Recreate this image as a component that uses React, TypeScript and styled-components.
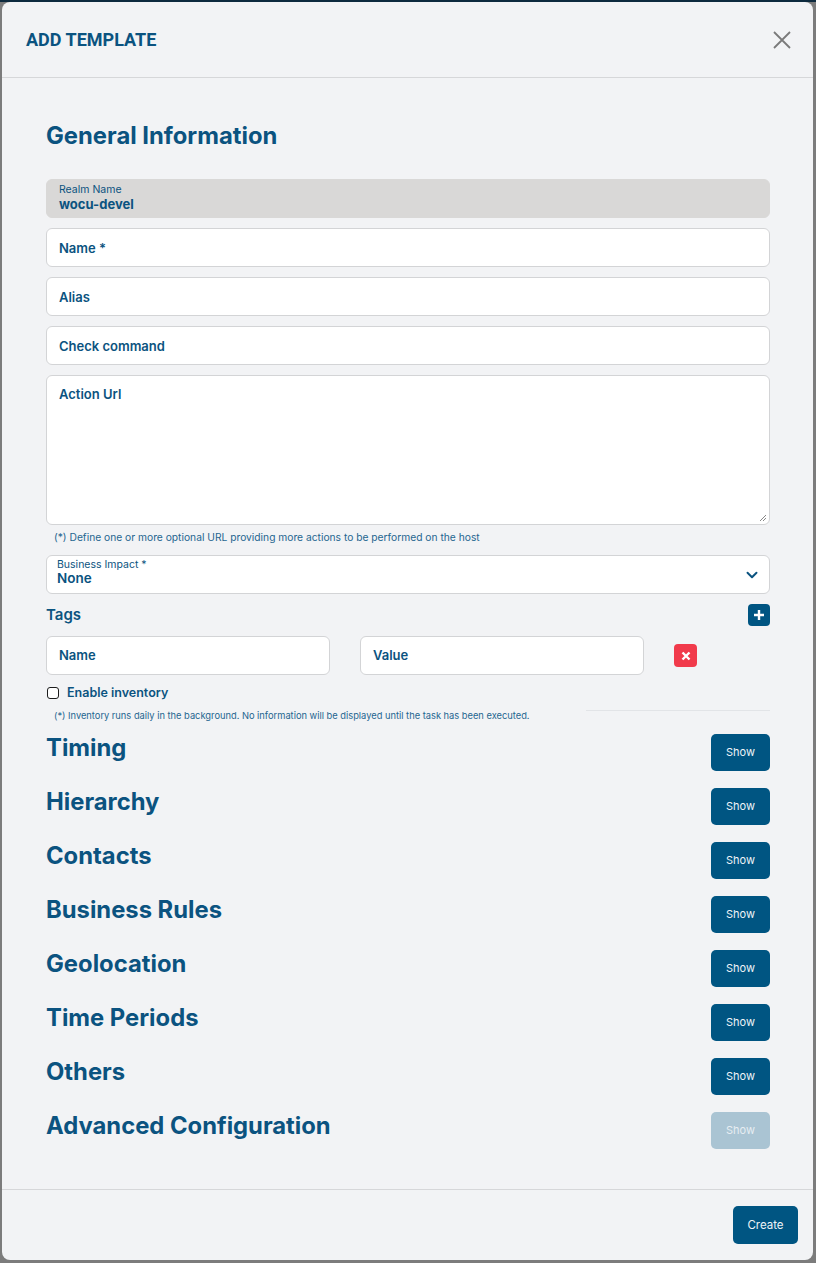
import React from "react";
import styled, { createGlobalStyle } from "styled-components";
import { ChevronDown } from "lucide-react";

const NAVY = "#0b5380";
const BUTTON = "#005582";

const SECTIONS = [
  { title: "Timing" },
  { title: "Hierarchy" },
  { title: "Contacts" },
  { title: "Business Rules" },
  { title: "Geolocation" },
  { title: "Time Periods" },
  { title: "Others" },
  { title: "Advanced Configuration", disabled: true },
];

const GlobalStyle = createGlobalStyle`
  html, body {
    margin: 0;
    padding: 0;
    background: #7c7c7c;
  }
  body {
    font-family: Inter, "Noto Sans", sans-serif;
    color: ${NAVY};
  }
  * { box-sizing: border-box; }
`;

function App() {
  return (
    <>
      <GlobalStyle />
      <Backdrop>
        <Modal>
          <Header>
            <Title>ADD TEMPLATE</Title>
            <CloseButton aria-label="close">
              <svg width="18" height="18" viewBox="0 0 18 18">
                <path d="M1 1 L17 17 M17 1 L1 17" stroke="#7a7a7a" strokeWidth="1.8" fill="none" />
              </svg>
            </CloseButton>
          </Header>

          <Body>
            <Heading>General Information</Heading>

            <Fields>
              <ReadOnlyField>
                <SmallLabel>Realm Name</SmallLabel>
                <Value>wocu-devel</Value>
              </ReadOnlyField>
              <Input>Name *</Input>
              <Input>Alias</Input>
              <Input>Check command</Input>
              <TextArea>
                Action Url
                <Resize viewBox="0 0 8 8" width="8" height="8">
                  <path d="M7 1 L1 7 M7 4 L4 7" stroke="#888" strokeWidth="1" />
                </Resize>
              </TextArea>
            </Fields>
            <Help>(*) Define one or more optional URL providing more actions to be performed on the host</Help>

            <Select>
              <div>
                <SmallLabel>Business Impact *</SmallLabel>
                <SelectValue>None</SelectValue>
              </div>
              <ChevronDown size={18} strokeWidth={2.6} color={NAVY} />
            </Select>

            <TagsHeader>
              <TagsTitle>Tags</TagsTitle>
              <IconButton $tone="navy" aria-label="add tag">
                <svg width="12" height="12" viewBox="0 0 12 12">
                  <path d="M6 1 V11 M1 6 H11" stroke="#fff" strokeWidth="2.4" />
                </svg>
              </IconButton>
            </TagsHeader>

            <TagRow>
              <TagInput>Name</TagInput>
              <TagInput>Value</TagInput>
              <IconButton $tone="red" aria-label="remove tag">
                <svg width="10" height="10" viewBox="0 0 10 10">
                  <path d="M1.5 1.5 L8.5 8.5 M8.5 1.5 L1.5 8.5" stroke="#fff" strokeWidth="2.4" />
                </svg>
              </IconButton>
            </TagRow>

            <CheckRow>
              <Box />
              <CheckLabel>Enable inventory</CheckLabel>
            </CheckRow>
            <NoteRow>
              <Note>(*) Inventory runs daily in the background. No information will be displayed until the task has been executed.</Note>
              <Rule />
            </NoteRow>

            <SectionList>
              {SECTIONS.map((s) => (
                <SectionRow key={s.title}>
                  <SectionTitle>{s.title}</SectionTitle>
                  <ShowButton disabled={s.disabled}>Show</ShowButton>
                </SectionRow>
              ))}
            </SectionList>
          </Body>

          <Footer>
            <CreateButton>Create</CreateButton>
          </Footer>
        </Modal>
      </Backdrop>
    </>
  );
}
export default App;

const Backdrop = styled.div`
  width: 816px;
  height: 1263px;
  padding: 2px 3px 0 2px;
  background: linear-gradient(#0d2a3e 0, #0d2a3e 2px, #7c7c7c 2px);
`;

const Modal = styled.div`
  width: 811px;
  height: 1258px;
  display: flex;
  flex-direction: column;
  background: #f2f3f5;
  border-radius: 8px;
  overflow: hidden;
`;

const Header = styled.div`
  height: 76px;
  flex-shrink: 0;
  display: flex;
  align-items: center;
  justify-content: space-between;
  padding: 0 22px 0 24px;
  border-bottom: 1px solid #d6d7d9;
`;

const Title = styled.h1`
  margin: 0;
  font-family: Roboto, "Liberation Sans", sans-serif;
  font-size: 18px;
  font-weight: 700;
  color: ${NAVY};
`;

const CloseButton = styled.button`
  border: 0;
  background: none;
  padding: 0;
  display: flex;
  cursor: pointer;
`;

const Body = styled.div`
  flex: 1;
  display: flex;
  flex-direction: column;
  padding: 44px 43px 0 44px;
`;

const Heading = styled.h2`
  margin: 0 0 29px;
  font-size: 23.8px;
  line-height: 28px;
  font-weight: 700;
  color: ${NAVY};
`;

const Fields = styled.div`
  display: flex;
  flex-direction: column;
  gap: 10px;
`;

const Field = styled.div`
  height: 39px;
  border-radius: 6px;
  padding: 0 12px;
  display: flex;
  align-items: center;
  font-size: 13px;
  font-weight: 600;
  color: ${NAVY};
  background: #fff;
  border: 1px solid #d3d4d6;
`;

const ReadOnlyField = styled(Field)`
  flex-direction: column;
  align-items: flex-start;
  justify-content: center;
  background: #d9d8d7;
  border-color: #d9d8d7;
  gap: 0;
  padding-bottom: 1px;
`;

const Input = styled(Field)``;

const SmallLabel = styled.div`
  font-size: 10.5px;
  font-weight: 400;
  line-height: 12px;
  color: ${NAVY};
`;

const Value = styled.div`
  font-size: 13px;
  font-weight: 700;
  line-height: 16px;
`;

const TextArea = styled(Field)`
  position: relative;
  height: 150px;
  align-items: flex-start;
  padding-top: 10px;
`;

const Resize = styled.svg`
  position: absolute;
  right: 2px;
  bottom: 2px;
`;

const Help = styled.div`
  margin: 5px 0 0 8px;
  font-size: 10.25px;
  line-height: 14px;
  color: #1f6690;
`;

const Select = styled(Field)`
  margin-top: 11px;
  height: 39px;
  padding: 0 8px 0 10px;
  justify-content: space-between;
  & > div {
    display: flex;
    flex-direction: column;
    gap: 0;
    margin-top: -4px;
  }
`;

const SelectValue = styled.div`
  font-size: 13.5px;
  font-weight: 600;
  line-height: 15px;
`;

const TagsHeader = styled.div`
  margin-top: 10px;
  display: flex;
  align-items: center;
  justify-content: space-between;
`;

const TagsTitle = styled.div`
  font-size: 15px;
  font-weight: 600;
  color: ${NAVY};
  margin-top: -2px;
`;

const IconButton = styled.button<{ $tone: "navy" | "red" }>`
  width: ${({ $tone }) => ($tone === "navy" ? "22px" : "23px")};
  height: ${({ $tone }) => ($tone === "navy" ? "22px" : "23px")};
  border: 0;
  padding: 0;
  border-radius: 4px;
  display: flex;
  align-items: center;
  justify-content: center;
  background: ${({ $tone }) => ($tone === "navy" ? BUTTON : "#f13a4b")};
`;

const TagRow = styled.div`
  margin-top: 10px;
  display: grid;
  grid-template-columns: 284px 284px 23px;
  column-gap: 30px;
  align-items: center;
`;

const TagInput = styled(Field)`
  padding-top: 0;
  line-height: 14px;
  padding-bottom: 2px;
`;

const CheckRow = styled.div`
  margin-top: 10px;
  display: flex;
  align-items: center;
  gap: 8px;
  padding-left: 1px;
`;

const Box = styled.span`
  width: 12px;
  height: 12px;
  border: 1.5px solid #1c1c1c;
  border-radius: 3px;
  background: #fff;
`;

const CheckLabel = styled.span`
  font-size: 12.5px;
  font-weight: 600;
  color: ${NAVY};
`;

const NoteRow = styled.div`
  margin-top: 9px;
  display: flex;
  gap: 56px;
  padding-left: 8px;
`;

const Note = styled.div`
  font-size: 9.3px;
  line-height: 14px;
  color: #1f6690;
  white-space: nowrap;
`;

const Rule = styled.div`
  flex: 1;
  height: 1px;
  background: #e2e4e7;
  margin-top: 1px;
`;

const SectionList = styled.div`
  margin-top: 11px;
  display: flex;
  flex-direction: column;
  gap: 17px;
`;

const SectionRow = styled.div`
  display: flex;
  align-items: flex-start;
  justify-content: space-between;
`;

const SectionTitle = styled.h3`
  margin: 0;
  font-size: 23.8px;
  line-height: 28px;
  font-weight: 700;
  color: ${NAVY};
`;

const ShowButton = styled.button`
  width: 59px;
  height: 37px;
  border: 0;
  border-radius: 5px;
  padding: 0 0 1px;
  font-family: Inter, "Noto Sans", sans-serif;
  font-size: 11px;
  color: #eef3f7;
  background: ${BUTTON};
  &:disabled {
    background: #aac4d3;
    color: #e6edf2;
  }
`;

const Footer = styled.div`
  flex-shrink: 0;
  display: flex;
  justify-content: flex-end;
  padding: 16px 15px 16px;
  border-top: 1px solid #d6d7d9;
`;

const CreateButton = styled(ShowButton)`
  width: 65px;
  height: 38px;
  font-size: 11.5px;
`;
